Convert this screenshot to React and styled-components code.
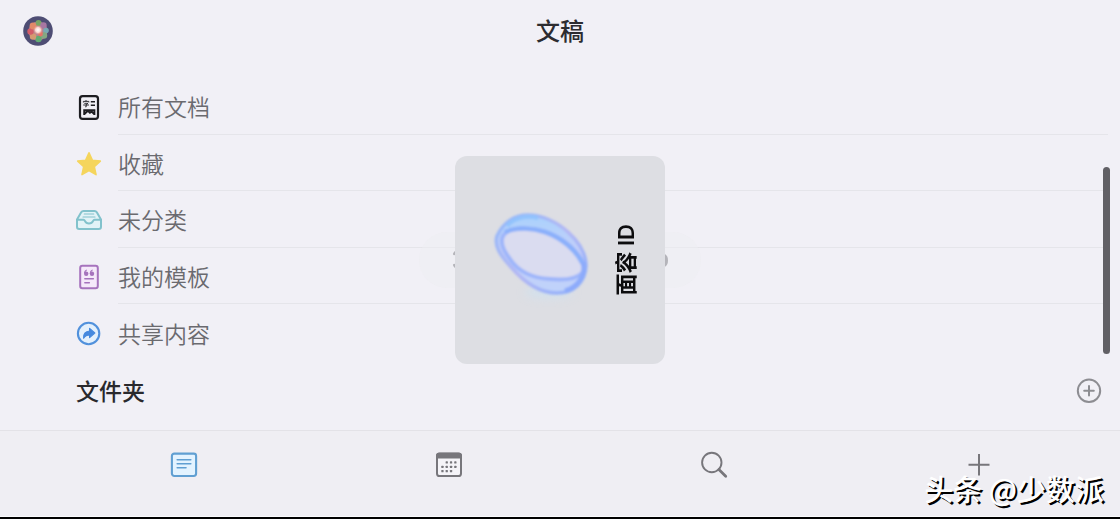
import React, { useState } from "react"

import styled, { createGlobalStyle } from "styled-components"

const folders = [
  { id : "all", label : "所有文档", Icon : AllDocsIcon },
  { id : "starred", label : "收藏", Icon : StarIcon },
  { id : "inbox", label : "未分类", Icon : InboxIcon },
  { id : "templates", label : "我的模板", Icon : TemplateIcon },
  { id : "shared", label : "共享内容", Icon : SharedIcon },
]

const tabs = [
  { id : "docs", label : "文稿", Icon : DocsTabIcon },
  { id : "calendar", label : "日历", Icon : CalendarTabIcon },
  { id : "search", label : "搜索", Icon : SearchTabIcon },
  { id : "new", label : "新建", Icon : PlusTabIcon },
]

function App() {
  const [activeTab, setActiveTab] = useState("docs")

  return (
    <Screen>
      <GlobalStyle />
      <Header>
        <Avatar type="button" aria-label="账户"><AvatarArt /></Avatar>
        <Title>文稿</Title>
      </Header>
      <Content>
        <FolderList>
          {folders.map(({ id, label, Icon }) => (
            <FolderItem key={id}>
              <FolderLink href={`#${id}`}>
                <IconSlot><Icon /></IconSlot>
                <FolderLabel>{label}</FolderLabel>
              </FolderLink>
            </FolderItem>
          ))}
        </FolderList>
        <SectionHeader>
          <SectionTitle>文件夹</SectionTitle>
          <AddButton type="button" aria-label="新建文件夹"><AddIcon /></AddButton>
        </SectionHeader>
        <ScrollThumb />
      </Content>
      <TabBar>
        {tabs.map(({ id, label, Icon }) => (
          <Tab key={id} type="button" aria-label={label} $active={activeTab === id} onClick={() => setActiveTab(id)}>
            <Icon />
          </Tab>
        ))}
      </TabBar>
      <Overlay>
        <Toast><ToastArt /></Toast>
      </Overlay>
      <Overlay>
        <FaceIdPanel role="dialog" aria-label="面容 ID">
          <FaceIdRing />
          <FaceIdLabel>面容 ID</FaceIdLabel>
        </FaceIdPanel>
      </Overlay>
      <Watermark>头条 @少数派</Watermark>
    </Screen>
  )
}

export default App

function AvatarArt() {
  return (
    <svg width="30" height="30" viewBox="0 0 30 30">
      <defs>
        <radialGradient id="avatar-core">
          <stop offset="0" stopColor="#fff" />
          <stop offset="0.5" stopColor="#fbd9d2" />
          <stop offset="1" stopColor="#e88878" stopOpacity="0" />
        </radialGradient>
        <filter id="avatar-soft"><feGaussianBlur stdDeviation="0.7" /></filter>
      </defs>
      <circle cx="15" cy="15" r="14.8" fill="#4e4d74" />
      <g filter="url(#avatar-soft)">
        <circle cx="15" cy="15" r="9.500" fill="#b58391" />
        <circle cx="15.500" cy="7" r="3" fill="#79a565" />
        <circle cx="20.500" cy="9.500" r="3.200" fill="#a877a2" />
        <circle cx="23" cy="14.500" r="2.800" fill="#78a9b4" />
        <circle cx="21" cy="19.500" r="3.200" fill="#84a882" />
        <circle cx="15.500" cy="23" r="3.200" fill="#62ac72" />
        <circle cx="10" cy="20.500" r="3.200" fill="#d59a72" />
        <circle cx="7.500" cy="15.500" r="3.200" fill="#d45c68" />
        <circle cx="10" cy="10" r="3.400" fill="#e18a69" />
        <circle cx="17.500" cy="18" r="2.400" fill="#e77268" />
      </g>
      <circle cx="15" cy="14" r="5" fill="url(#avatar-core)" />
    </svg>
  )
}

function AllDocsIcon() {
  return (
    <svg width="28" height="28" viewBox="0 0 28 28" fill="none" stroke="#1d1d21">
      <rect x="5" y="3.200" width="18" height="22.600" rx="2.600" strokeWidth="2.200" />
      <path d="M11 7v1.200M8.400 9.500V8.400h5.400v1.100M9.300 10.300h3.600l-1.700 1.300v2.200h-1M8.200 12h5.800" strokeWidth="0.900" />
      <path d="M15.800 8.800h4.200M15.800 12.300h4.200" strokeWidth="1.500" />
      <path d="M9.200 22v-4.800h10.200v4.800M9.400 21l3.500-3.200 2 2 1.700-1.200 2.800 2.600" strokeWidth="1.900" />
    </svg>
  )
}

function StarIcon() {
  return (
    <svg width="28" height="28" viewBox="0 0 28 28">
      <path d="M14 2.800l3.300 7.400 8 .9-6 5.500 1.700 8-7-4.100-7 4.100 1.700-8-6-5.500 8-.9z" fill="#f5d55c" stroke="#f5d55c" strokeWidth="1.600" strokeLinejoin="round" />
    </svg>
  )
}

function InboxIcon() {
  return (
    <svg width="28" height="28" viewBox="0 0 28 28" fill="none" stroke="#82c2cc" strokeWidth="2" strokeLinecap="round" strokeLinejoin="round">
      <path d="M2 13.500L6.200 6.200Q7 4.900 8.500 4.900h11q1.500 0 2.300 1.300L26 13.500v7.300q0 2.200-2.200 2.200H4.200Q2 23 2 20.800z" fill="#e2f3f7" />
      <path d="M2.300 13.700h6.200c1 0 1.100.5 1.500 1.400.7 1.600 2 2.400 4 2.400s3.300-.8 4-2.400c.4-.9.500-1.400 1.500-1.400h6.200" />
      <path d="M9.300 8h9.400M8 11h12" strokeWidth="1.200" />
    </svg>
  )
}

function TemplateIcon() {
  return (
    <svg width="28" height="28" viewBox="0 0 28 28" fill="none" stroke="#a673bd" strokeLinecap="round">
      <rect x="5.200" y="2.800" width="17.600" height="22.400" rx="2.200" strokeWidth="2" fill="#f5e9fa" />
      <path d="M9.800 15.800h8.600M9.800 19.700h4.600" strokeWidth="1.400" />
      <g fill="#a673bd" stroke="none">
        <circle cx="11.200" cy="10.700" r="2.200" />
        <circle cx="17" cy="10.700" r="2.200" />
        <path d="M9 11c-.1-2.300.8-3.900 2.600-4.500l.5.800c-1 .5-1.400 1.100-1.500 2zM14.800 11c-.1-2.300.8-3.900 2.600-4.500l.5.800c-1 .5-1.400 1.100-1.500 2z" />
      </g>
    </svg>
  )
}

function SharedIcon() {
  return (
    <svg width="28" height="28" viewBox="0 0 28 28">
      <circle cx="13.600" cy="13.500" r="10.700" fill="#e3f0fc" stroke="#5191dc" strokeWidth="2.100" />
      <path d="M14.600 8.400l5.200 4.600-5.200 4.600v-2.700c-2.900 0-4.600.9-6 3.300-.4-4 1.800-7 6-7.200z" fill="#4589de" stroke="#4589de" strokeWidth="1.200" strokeLinejoin="round" />
    </svg>
  )
}

function AddIcon() {
  return (
    <svg width="26" height="26" viewBox="0 0 26 26" fill="none" stroke="#8d8d92" strokeLinecap="round">
      <circle cx="13" cy="12.800" r="11.200" strokeWidth="2" />
      <path d="M13 8v9.600M8.200 12.800h9.600" strokeWidth="2" />
    </svg>
  )
}

function DocsTabIcon() {
  return (
    <svg width="28" height="28" viewBox="0 0 28 28" fill="none" stroke="currentColor" strokeLinecap="round">
      <rect x="1.900" y="2.600" width="24.200" height="22.400" rx="2.400" strokeWidth="2.100" fill="#e3f3ff" />
      <path d="M7.200 8.800h13.600M7.200 12.700h13.600M7.200 16.700h8.800" strokeWidth="1.600" />
    </svg>
  )
}

function CalendarTabIcon() {
  return (
    <svg width="28" height="28" viewBox="0 0 28 28">
      <rect x="2" y="2.600" width="24" height="22.400" rx="2.600" fill="#f5f4f8" stroke="currentColor" strokeWidth="2" />
      <path d="M1 7.600V4.600Q1 1.700 4 1.700h20q3 0 3 2.900v3z" fill="currentColor" />
      <g fill="currentColor">
        {[[10.6, 10.3], [14.9, 10.3], [19.2, 10.3], [6.3, 14.7], [10.6, 14.7], [14.9, 14.7], [19.2, 14.7], [6.3, 19], [10.6, 19], [14.9, 19]].map(([x, y]) => (
          <rect key={`${x}-${y}`} x={x} y={y} width="2.300" height="2.300" rx="0.600" />
        ))}
      </g>
    </svg>
  )
}

function SearchTabIcon() {
  return (
    <svg width="28" height="28" viewBox="0 0 28 28" fill="none" stroke="currentColor" strokeLinecap="round">
      <circle cx="11.800" cy="11.500" r="9.700" strokeWidth="1.900" />
      <path d="M18.900 18.600l6.800 6.600" strokeWidth="2.800" />
    </svg>
  )
}

function PlusTabIcon() {
  return (
    <svg width="28" height="28" viewBox="0 0 28 28" fill="none" stroke="currentColor" strokeWidth="2">
      <path d="M14 3v21.500M3.500 13.700h21" />
    </svg>
  )
}

function ToastArt() {
  return (
    <svg width="216" height="24" viewBox="0 0 216 24" fill="none" stroke="#b4b4ba" strokeWidth="2.500" strokeLinecap="round">
      <path d="M2.200 6l.8-1.500M2.200 17l.8 1.500" />
      <path d="M212 7.500q2.500 1 2.500 5t-2.500 5" strokeWidth="3" />
    </svg>
  )
}

function FaceIdRing() {
  return (
    <svg width="112" height="112" viewBox="0 0 112 112" fill="none">
      <defs>
        <filter id="ring-soft" x="-20%" y="-20%" width="140%" height="140%"><feGaussianBlur stdDeviation="1.200" /></filter>
        <filter id="ring-glow" x="-40%" y="-80%" width="180%" height="260%"><feGaussianBlur stdDeviation="5" /></filter>
        <linearGradient id="ring-outer" x1="0" y1="0" x2="1" y2="1">
          <stop offset="0" stopColor="#92b8fa" />
          <stop offset="0.500" stopColor="#b3b7f4" />
          <stop offset="1" stopColor="#8db0fc" />
        </linearGradient>
        <linearGradient id="ring-fill" x1="0" y1="0" x2="0" y2="1">
          <stop offset="0" stopColor="#a9d2fd" />
          <stop offset="0.500" stopColor="#c6cef8" />
          <stop offset="1" stopColor="#bfd3fa" />
        </linearGradient>
      </defs>
      <ellipse cx="64" cy="88" rx="24" ry="6" fill="#c6e4f8" opacity="0.500" filter="url(#ring-glow)" />
      <g filter="url(#ring-soft)">
        <path d="M12 32C18 19 29 11 43 11C57 11 72 18 83 28C94 38 101 50 101 62C100 79 88 89 72 89C54 89 38 77 26 63C15 51 9 42 12 32Z" fill="url(#ring-fill)" stroke="url(#ring-outer)" strokeWidth="3.500" />
        <path d="M18 32C22 25 34 23 48 25C64 27 80 36 90 47C98 56 101 65 97 69C91 76 77 76 65 75C46 74 33 67 25 55C18 46 15 38 18 32Z" fill="#dadcf0" stroke="#9eb5fa" strokeWidth="4" />
        <path d="M20 28C32 23 48 24 60 28C77 34 91 46 98 60" stroke="#8bb0fb" strokeWidth="4.500" />
        <path d="M98 58C102 71 93 83 80 87" stroke="#8dabfb" strokeWidth="5" />
        <path d="M22 22C29 14 41 11 53 14" stroke="#92c3fd" strokeWidth="4" />
      </g>
    </svg>
  )
}

const GlobalStyle = createGlobalStyle`
  * {
    box-sizing: border-box;
  }

  body {
    margin: 0;
    background: #f1f0f6;
    font-family: "Noto Sans CJK SC", "Liberation Sans", sans-serif;
  }

  button {
    padding: 0;
    border: none;
    background: transparent;
    cursor: pointer;
  }

  svg {
    display: block;
  }
`

const Screen = styled.div`
  position: relative;
  min-height: 100vh;
  display: flex;
  flex-direction: column;
  background: #f1f0f6;
  border-bottom: 2px solid #000;
`

const Header = styled.header`
  display: grid;
  grid-template-columns: 1fr auto 1fr;
  align-items: center;
  height: 62px;
  padding: 0 23px;
`

const Avatar = styled.button`
  justify-self: start;
  border-radius: 50%;
`

const Title = styled.h1`
  margin: 0;
  padding-bottom: 2px;
  font-size: 24px;
  line-height: 32px;
  font-weight: 500;
  color: #2c2c30;
`

const Content = styled.main`
  position: relative;
  flex: 1;
  padding: 16px 12px 0 75px;
`

const FolderList = styled.ul`
  display: grid;
  grid-template-rows: repeat(5, 1fr);
  height: 283px;
  margin: 0;
  padding: 0;
  list-style: none;
`

const FolderLabel = styled.span`
  flex: 1;
  display: flex;
  align-items: center;
  padding-top: 1px;
  border-bottom: 1px solid #e5e5ea;
`

const FolderItem = styled.li`
  display: flex;

  &:last-child ${FolderLabel} {
    border-bottom-color: transparent;
  }
`

const FolderLink = styled.a`
  flex: 1;
  display: flex;
  gap: 15px;
  font-size: 23px;
  line-height: 32px;
  font-weight: 350;
  color: #6a6a6f;
  text-decoration: none;
`

const IconSlot = styled.span`
  display: flex;
  align-items: center;
  padding-top: 2px;
`

const SectionHeader = styled.div`
  display: flex;
  align-items: center;
  justify-content: space-between;
  height: 60px;
  padding: 0 6px 0 1px;
`

const SectionTitle = styled.h2`
  margin: 0;
  padding-bottom: 2px;
  font-size: 23px;
  line-height: 32px;
  font-weight: 500;
  color: #29292d;
`

const AddButton = styled.button``

const ScrollThumb = styled.div`
  position: absolute;
  top: 105px;
  right: 10px;
  width: 7px;
  height: 187px;
  border-radius: 4px;
  background: #616065;
`

const TabBar = styled.nav`
  display: flex;
  height: 87px;
  padding: 0 9px 18px 52px;
  border-top: 1px solid #e3e2e7;
  background: #efeef3;
  box-shadow: inset 0 -1px #fafafc;
`

const Tab = styled.button`
  flex: 1;
  display: flex;
  align-items: center;
  justify-content: center;
  color: ${({ $active }) => $active ? "#609fd2" : "#77767b"};
`

const Overlay = styled.div`
  position: absolute;
  inset: 0;
  display: flex;
  align-items: center;
  justify-content: center;
  padding-top: 3px;
  pointer-events: none;
`

const Toast = styled.div`
  display: flex;
  align-items: center;
  justify-content: center;
  width: 282px;
  height: 56px;
  border-radius: 28px;
  background: rgb(238 238 242 / 50%);
`

const FaceIdPanel = styled.div`
  display: flex;
  align-items: center;
  justify-content: space-between;
  width: 210px;
  height: 208px;
  padding: 0 24px 0 30px;
  border-radius: 12px;
  background: #dddee3;
`

const FaceIdLabel = styled.span`
  writing-mode: vertical-rl;
  text-orientation: sideways;
  transform: rotate(180deg);
  font-family: Inter, "Noto Sans CJK SC", sans-serif;
  font-size: 22px;
  line-height: 30px;
  font-weight: 600;
  white-space: nowrap;
  color: #0c0c0e;
`

const Watermark = styled.div`
  position: absolute;
  right: 16px;
  bottom: 9px;
  font-size: 29px;
  line-height: 40px;
  font-weight: 500;
  color: #fff;
  text-shadow: 2px 2px 0 #000;
`
